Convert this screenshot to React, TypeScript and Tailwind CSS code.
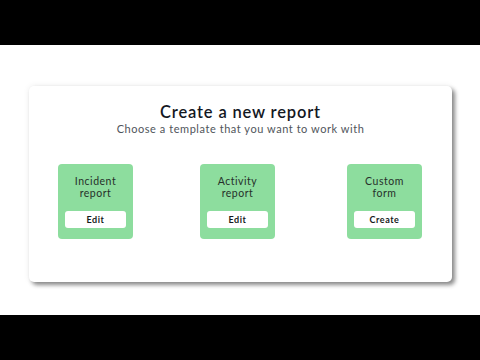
import React from "react";

const tiles = [
  { l1: "Incident", l2: "report", btn: "Edit" },
  { l1: "Activity", l2: "report", btn: "Edit" },
  { l1: "Custom", l2: "form", btn: "Create" },
];

function Tile({ l1, l2, btn }: { l1: string; l2: string; btn: string }) {
  return (
    <div className="w-[75px] h-[75px] rounded-[4px] bg-[#8ddd9e] flex flex-col items-center pt-[11px]">
      <div className="text-[10.5px] leading-[12px] text-[#26302a] text-center tracking-[0.05em]">
        <div>{l1}</div>
        <div>{l2}</div>
      </div>
      <div className="mt-[12px] w-[61px] h-[17px] rounded-[3px] bg-white flex items-center justify-center text-[9px] font-bold text-[#151a20] tracking-[0.06em]">
        {btn}
      </div>
    </div>
  );
}

export default function App() {
  return (
    <div className="w-[480px] h-[360px] flex flex-col bg-white" style={{ fontFamily: "Lato, 'Open Sans', sans-serif" }}>
      <div className="h-[45px] bg-black" />
      <div className="flex-1 bg-white">
        <div className="ml-[29px] mt-[41px] w-[423px] h-[196px] rounded-[5px] bg-white shadow-[3px_3px_4px_rgba(0,0,0,0.45),0_0_6px_rgba(0,0,0,0.08)] flex flex-col items-center pt-[16px]">
          <div className="text-[16.5px] leading-[20px] font-semibold text-[#14181f] tracking-[0.05em]">Create a new report</div>
          <div className="text-[11px] leading-[14px] text-[#50555b] tracking-[0.05em]">Choose a template that you want to work with</div>
          <div className="self-start ml-[29px] mt-[28px] flex">
            <Tile {...tiles[0]} />
            <div className="ml-[67px]"><Tile {...tiles[1]} /></div>
            <div className="ml-[72px]"><Tile {...tiles[2]} /></div>
          </div>
        </div>
      </div>
      <div className="h-[45px] bg-black" />
    </div>
  );
}
